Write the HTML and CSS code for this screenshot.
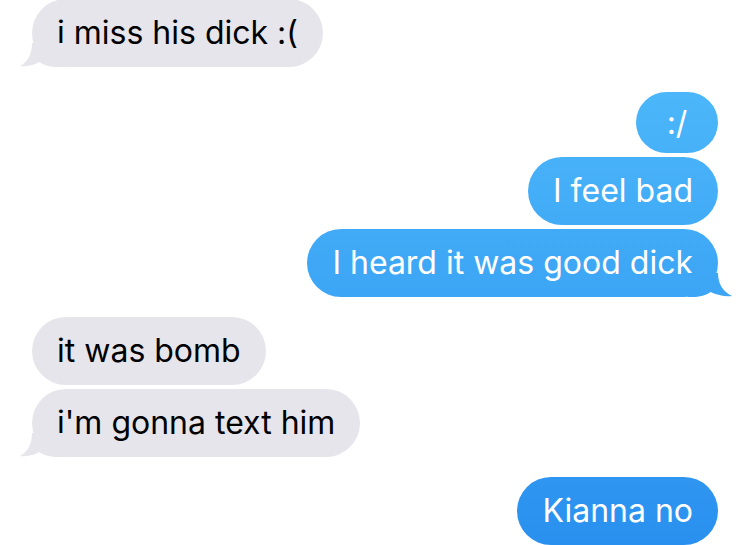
FILE: index.html
```html
<!DOCTYPE html>
<html lang="en">
  <head>
    <meta charset="UTF-8" />
    <meta name="viewport" content="width=device-width, initial-scale=1.0" />
    <title>Messages</title>
    <link rel="stylesheet" href="styles.css">
  </head>
  <body>
    <div class="chat">
      <div class="group them first">
        <div class="bubble tail">i miss his dick :(</div>
      </div>

      <div class="group me">
        <div class="bubble short">:/</div>
        <div class="bubble">I feel bad</div>
        <div class="bubble tail">I heard it was good dick</div>
      </div>

      <div class="group them">
        <div class="bubble">it was bomb</div>
        <div class="bubble tail">i'm gonna text him</div>
      </div>

      <div class="group me">
        <div class="bubble">Kianna no</div>
      </div>
    </div>
  </body>
</html>
```

FILE: styles.css
```css
body {
  margin: 0;
  background: #fff;
  font-family: Inter, "Noto Sans", sans-serif;
}
.chat {
  display: flex;
  flex-direction: column;
  gap: 20px;
  padding: 0 32px;
  margin-top: -1px;
}
.group {
  display: flex;
  flex-direction: column;
  gap: 4px;
}
.group.me {
  align-items: flex-end;
}
.group.them {
  align-items: flex-start;
}
.group.first {
  margin-bottom: 5px;
}
.bubble {
  position: relative;
  height: 68px;
  line-height: 68px;
  padding: 0 25px;
  border-radius: 34px;
  font-size: 32px;
  white-space: nowrap;
}
.them .bubble {
  background: #e6e5eb;
  color: #000;
}
.me .bubble {
  background: linear-gradient(#53befc, #2990ef) fixed;
  color: #fff;
}
.bubble.short {
  height: 61px;
  line-height: 61px;
  min-width: 82px;
  box-sizing: border-box;
  text-align: center;
  border-radius: 31px;
}

/* tails */
.tail::after {
  content: "";
  position: absolute;
  bottom: 0;
  width: 44px;
  height: 24px;
  background: inherit;
}
.them .tail::after {
  left: -12px;
  clip-path: path("M12 0 C12 11 8 18.5 0 23 C7 23.8 14 22 19.5 19 C24 22.5 30 24 38 24 L44 24 L44 0 Z");
}
.me .tail::after {
  right: -14px;
  clip-path: path("M30 0 C30 11 35 18.5 44 23 C37 23.8 29 22 22.5 19 C18 22.5 12 24 4 24 L0 24 L0 0 Z");
}
```
